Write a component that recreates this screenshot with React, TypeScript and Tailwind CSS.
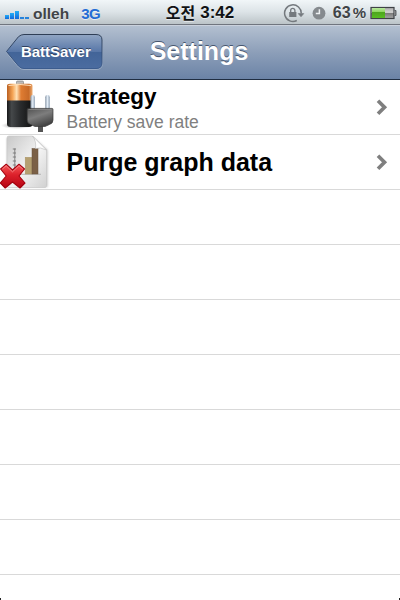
import React from "react";

function Signal() {
  return (
    <svg className="block shrink-0" width="25" height="10" viewBox="0 0 25 10">
      <defs>
        <linearGradient id="sig" x1="0" y1="0" x2="0" y2="1">
          <stop offset="0" stopColor="#22aef6" />
          <stop offset="1" stopColor="#1268dc" />
        </linearGradient>
      </defs>
      <rect x="0" y="5" width="4" height="4" fill="url(#sig)" />
      <rect x="5" y="3" width="4" height="6" fill="url(#sig)" />
      <rect x="10" y="1" width="4" height="8" fill="url(#sig)" />
      <rect x="15" y="7" width="4" height="2" fill="#2583dc" />
      <rect x="20" y="7" width="4" height="2" fill="#2583dc" />
    </svg>
  );
}

function StatusIcons() {
  return (
    <svg className="block shrink-0" width="46" height="22" viewBox="0 0 46 22">
      <g fill="none" stroke="#74797e" strokeWidth="1.5">
        <path d="M13.8 18.5A8.3 8.3 0 1 1 18.2 11.5" />
        <path d="M15.2 11.6h5.6l-2.8 3.2z" fill="#74797e" strokeWidth="0.6" />
        <path d="M7.7 10.3V8.5a2.1 2.1 0 0 1 4.2 0v1.8" strokeWidth="1.3" />
        <rect x="6.2" y="10" width="7.2" height="5" fill="#74797e" stroke="none" />
      </g>
      <circle cx="36" cy="11.2" r="6.4" fill="#858a8e" />
      <path d="M36.4 7.3v4.2h-3.6" fill="none" stroke="#eef1f3" strokeWidth="1.5" />
    </svg>
  );
}

function BatteryLevel() {
  return (
    <svg className="block shrink-0" width="27" height="14" viewBox="0 0 27 14">
      <defs>
        <linearGradient id="lvl" x1="0" y1="0" x2="0" y2="1">
          <stop offset="0" stopColor="#b9e8a0" />
          <stop offset=".38" stopColor="#8fd860" />
          <stop offset=".42" stopColor="#4da51d" />
          <stop offset="1" stopColor="#58bd22" />
        </linearGradient>
        <linearGradient id="emp" x1="0" y1="0" x2="0" y2="1">
          <stop offset="0" stopColor="#aaa" />
          <stop offset=".45" stopColor="#d4d4d4" />
          <stop offset=".5" stopColor="#777" />
          <stop offset="1" stopColor="#aaa" />
        </linearGradient>
      </defs>
      <rect x="1" y="1.5" width="23" height="11" fill="url(#emp)" stroke="#3f4246" strokeWidth="1.2" />
      <rect x="2" y="2" width="13" height="10" fill="url(#lvl)" />
      <path d="M24.5 4.5h1.5v5h-1.5" fill="#888" stroke="#54575b" strokeWidth="0.9" />
    </svg>
  );
}

function BackButton() {
  return (
    <div className="relative h-[38px] w-[98px] shrink-0">
      <svg className="absolute inset-0" width="98" height="38" viewBox="0 0 98 38">
        <defs>
          <linearGradient id="back" x1="0" y1="0" x2="0" y2="1">
            <stop offset="0" stopColor="#91a6c4" />
            <stop offset=".5" stopColor="#5877a8" />
            <stop offset=".52" stopColor="#426498" />
            <stop offset="1" stopColor="#4b6ca0" />
          </linearGradient>
          <linearGradient id="backLine" x1="0" y1="0" x2="0" y2="1">
            <stop offset="0" stopColor="#2f3f56" />
            <stop offset="1" stopColor="#3c5c8e" />
          </linearGradient>
        </defs>
        <path d="M1.5 19.5L13.5 4.7Q16 2 19 2H91Q97.5 2 97.5 8V30Q97.5 36.5 91 36.5H19Q16 36.5 13.5 34Z" fill="none" stroke="#a9b8cc" strokeOpacity=".75" />
        <path d="M1.5 18.5L13.5 3.7Q16 1.5 19 1.5H91Q97 1.5 97 7V30Q97 35.5 91 35.5H19Q16 35.5 13.5 33Z" fill="url(#back)" stroke="url(#backLine)" />
      </svg>
      <span className="relative block pl-4 pt-[10px] text-[15px] font-bold leading-[18px] tracking-[-0.04px] text-white [text-shadow:0_-1px_0_#2f4260]">BattSaver</span>
    </div>
  );
}

function PowerIcon() {
  return (
    <svg className="block" width="60" height="54" viewBox="0 80 60 54">
      <defs>
        <linearGradient id="copper">
          <stop offset="0" stopColor="#b95f20" />
          <stop offset=".22" stopColor="#f5a455" />
          <stop offset=".38" stopColor="#ffe0b4" />
          <stop offset=".55" stopColor="#df7c32" />
          <stop offset=".85" stopColor="#c76a28" />
          <stop offset="1" stopColor="#edaa6e" />
        </linearGradient>
        <linearGradient id="cell">
          <stop offset="0" stopColor="#171819" />
          <stop offset=".18" stopColor="#45484a" />
          <stop offset=".5" stopColor="#2b2d2f" />
          <stop offset="1" stopColor="#111" />
        </linearGradient>
        <linearGradient id="steel">
          <stop offset="0" stopColor="#8a98a8" />
          <stop offset=".5" stopColor="#e2ecf6" />
          <stop offset="1" stopColor="#8fa0b2" />
        </linearGradient>
        <linearGradient id="plug" x1="0" y1="0" x2=".5" y2="1">
          <stop offset="0" stopColor="#505050" />
          <stop offset=".5" stopColor="#7d7d7d" />
          <stop offset=".8" stopColor="#5c5c5c" />
          <stop offset="1" stopColor="#444" />
        </linearGradient>
        <radialGradient id="contact">
          <stop offset="0" stopColor="#555" stopOpacity=".7" />
          <stop offset="1" stopColor="#777" stopOpacity="0" />
        </radialGradient>
      </defs>
      <ellipse cx="17" cy="125.5" rx="16" ry="3.5" fill="url(#contact)" />
      <rect x="16.5" y="81" width="7" height="5" rx="1" fill="#bbb" stroke="#777" strokeWidth=".6" />
      <path d="M7 86Q7 83.8 10 83.8H29.5Q32.5 83.8 32.5 86V101H7Z" fill="url(#copper)" />
      <path d="M8.5 85.5Q20 83.5 31 85.5" stroke="#ffe1bd" strokeWidth="1" fill="none" />
      <path d="M7 100.5H32.5V124Q32.5 127 29 127H10.5Q7 127 7 124Z" fill="url(#cell)" />
      <rect x="30.5" y="95" width="4.4" height="15" rx="2.2" fill="url(#steel)" />
      <rect x="45.2" y="95" width="4.6" height="15" rx="2.2" fill="url(#steel)" />
      <rect x="38" y="125" width="5" height="7" fill="#555" />
      <path d="M27.2 109.5Q27.2 108.4 28.5 108.4H52Q53 108.4 53 109.5V120Q53 123.5 49.5 124.5L45 126.5H35L30.5 124.5Q27.2 123.5 27.2 120Z" fill="url(#plug)" stroke="#393939" strokeWidth=".7" />
      <path d="M28.5 109.5H51.7" stroke="#8d8d8d" strokeWidth=".7" />
    </svg>
  );
}

function PurgeIcon() {
  return (
    <svg className="block" width="60" height="54" viewBox="0 135 60 54">
      <defs>
        <linearGradient id="paper" x1="0" y1="0" x2="1" y2="1">
          <stop offset="0" stopColor="#c8c8c8" />
          <stop offset=".55" stopColor="#f3f3f3" />
          <stop offset="1" stopColor="#d1d1d1" />
        </linearGradient>
        <linearGradient id="red" x1="0" y1="0" x2="0" y2="1">
          <stop offset="0" stopColor="#f65a5a" />
          <stop offset=".45" stopColor="#dc202b" />
          <stop offset="1" stopColor="#b50413" />
        </linearGradient>
        <filter id="soft" x="-20%" y="-20%" width="140%" height="140%">
          <feGaussianBlur stdDeviation="1" />
        </filter>
      </defs>
      <path d="M7 138H34L47.5 150V187H7Z" fill="#999" opacity=".6" filter="url(#soft)" />
      <path d="M7 138Q7 136 9 136H32.5L46.5 150V185.5Q46.5 187.5 45 187.5H9Q7 187.5 7 185.5Z" fill="url(#paper)" stroke="#c6c6c6" strokeWidth=".6" />
      <path d="M14.8 148.5V174.5M12.8 149H16M12.8 153H16M12.8 157H16M12.8 161H16M12.8 165H16" stroke="#777" strokeWidth=".9" />
      <path d="M12 174.3H41" stroke="#aaa" strokeWidth=".8" />
      <rect x="25.2" y="157.3" width="7.3" height="16.7" fill="#b5a071" stroke="#a89263" strokeWidth=".5" />
      <rect x="32" y="148.5" width="6" height="25.5" fill="#7b6046" stroke="#6a523e" strokeWidth=".5" />
      <path d="M32.5 136L46.5 150Q40 146.8 35.5 148.5Q36.5 141 32.5 136Z" fill="#fdfdfd" stroke="#bbb" strokeWidth=".6" />
      <path d="M.6 169L6.2 164.2L12.5 170L19 164.2L24.5 169L19 176L25 183L20 188L12.5 182L5.2 188L.3 183L6.2 176Z" fill="url(#red)" stroke="#a3000e" strokeWidth="1.1" strokeLinejoin="round" />
      <path d="M2.4 169L6.2 165.8L12.5 171.8L19 165.8L22.8 169" stroke="#f99090" strokeWidth=".8" fill="none" />
    </svg>
  );
}

function Row({ icon, children }: { icon: React.ReactNode; children: React.ReactNode }) {
  return (
    <div className="flex h-[55px] items-start border-b border-[#d9d9d9]">
      {icon}
      <div className="flex h-[54px] flex-1 flex-col whitespace-nowrap pl-[6.5px]">{children}</div>
      <svg className="mr-[11px] mt-[19px] block" width="13" height="17" viewBox="0 0 13 17">
        <path d="M2 1.8L8.5 8.3L2 14.8" fill="none" stroke="#7f7f7f" strokeWidth="3.7" />
      </svg>
    </div>
  );
}

export default function App() {
  return (
    <div className="h-[600px] w-[400px] overflow-hidden bg-white font-['Liberation_Sans','Noto_Sans_CJK_KR',sans-serif]">
      <div className="grid h-[25px] grid-cols-[160px_80px_160px] border-b border-[#70757e] bg-linear-to-b from-[#f1f6f8] via-[#dce3e7] to-[#bcc4c8] font-bold text-[#414447] [text-shadow:0_1px_0_#ffffff99]">
        <div className="flex items-center pl-[5px]">
          <div className="pt-[4px]"><Signal /></div>
          <span className="pl-[3px] pt-[2px] text-[15.5px] leading-[24px]">olleh</span>
          <span className="pl-[12px] pt-[2px] text-[15px] leading-[24px] tracking-[-0.4px] text-[#246cd5]">3G</span>
        </div>
        <div className="flex items-center justify-center whitespace-nowrap text-[17px] leading-[24px] text-[#101214]">
          <span className="pb-[2px] font-['Noto_Sans_CJK_KR',sans-serif] text-[16px] font-bold">오전</span>
          <span className="pl-[5px]">3:42</span>
        </div>
        <div className="flex items-center justify-end pr-[3px]">
          <StatusIcons />
          <span className="pl-[4px] text-[16px] leading-[24px]">63</span>
          <span className="pl-[2px] pr-[4px] text-[15px] leading-[24px]">%</span>
          <BatteryLevel />
        </div>
      </div>
      <div className="grid h-[55px] grid-cols-[104px_190px_106px] border-b border-[#202e42] bg-linear-to-b from-[#b5c1d1] via-[#8d9fb9] to-[#6b83a6] shadow-[inset_0_1px_0_#cad1dc]">
        <div className="flex items-start pl-[5px] pt-[8px]"><BackButton /></div>
        <h1 className="pt-[12px] text-center text-[25px] font-bold leading-[29px] text-white [text-shadow:0_-1px_0_#46566e]">Settings</h1>
      </div>
      <Row icon={<PowerIcon />}>
        <span className="pt-[4px] text-[22.5px] font-bold leading-[26px] text-black">Strategy</span>
        <span className="pt-px text-[17.5px] leading-[22px] text-[#808080]">Battery save rate</span>
      </Row>
      <Row icon={<PurgeIcon />}>
        <span className="pt-[12px] text-[25px] font-bold leading-[30px] text-black">Purge graph data</span>
      </Row>
      {[0, 1, 2, 3, 4, 5, 6].map((row) => (
        <div key={row} className="h-[55px] border-b border-[#d9d9d9]" />
      ))}
      <div className="flex h-[25px] items-end justify-between">
        <div className="h-[2px] w-px bg-[#222]" />
        <div className="h-[2px] w-px bg-[#222]" />
      </div>
    </div>
  );
}
